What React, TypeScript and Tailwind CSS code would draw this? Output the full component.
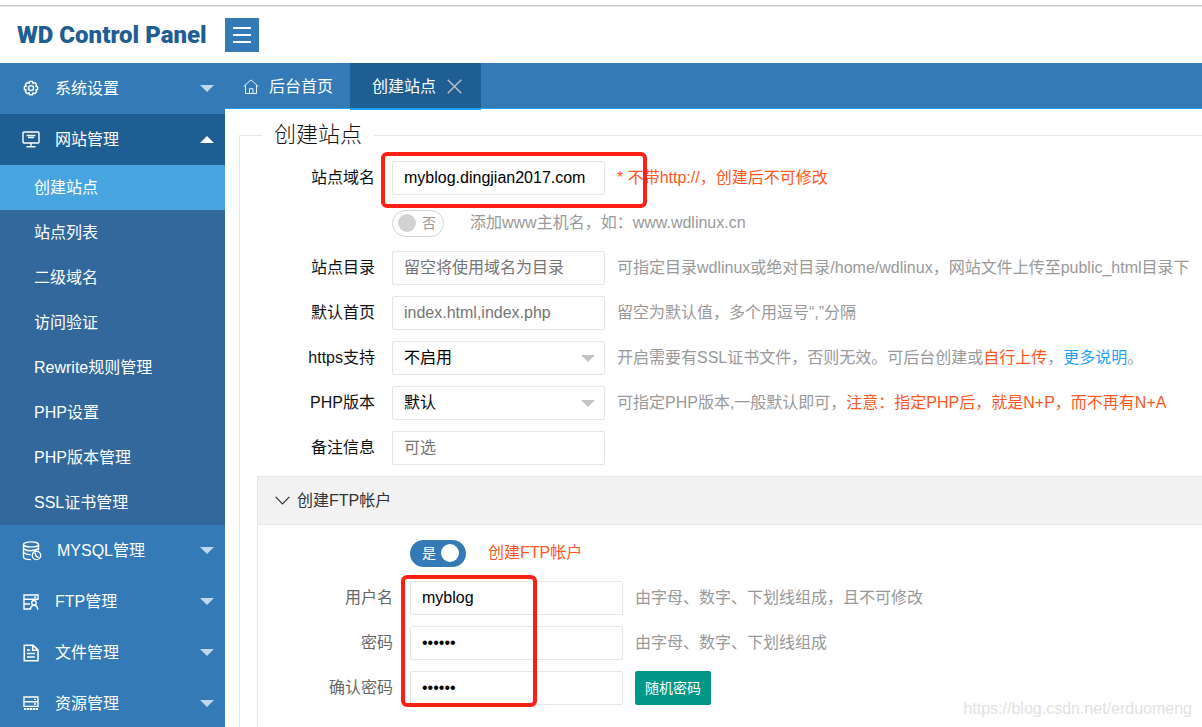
import React, { useState } from "react";

interface MenuGroup {
  label: string;
  icon: React.ReactNode;
  children?: string[];
}

interface FieldProps {
  id: string;
  label: string;
  labelClass?: string;
  hint?: React.ReactNode;
  children: React.ReactNode;
}

const iconProps = {
  width: 18,
  height: 18,
  viewBox: "0 0 18 18",
  fill: "none",
  stroke: "currentColor",
  strokeWidth: 1.4,
};

const GearIcon = () => (
  <svg {...iconProps}>
    <path
      d="M7.600 1.500h2.800l.5 1.900 1.700-.9 2 2-.9 1.700 1.900.5v2.800l-1.900.5.9 1.700-2 2-1.700-.9-.5 1.900H7.600l-.5-1.900-1.700.9-2-2 .9-1.700-1.900-.5V6.700l1.900-.5-.9-1.700 2-2 1.700.9z"
      strokeLinejoin="round"
    />
    <circle cx="9" cy="8.100" r="2.500" />
  </svg>
);

const MonitorIcon = () => (
  <svg {...iconProps}>
    <rect x="1" y="1" width="16" height="11" rx="1" />
    <path d="M4.500 4.500h9M6 6.500h6M9 12v3.500M4.500 15.700h9" />
  </svg>
);

const DatabaseIcon = () => (
  <svg {...iconProps} width={20} height={20} viewBox="0 0 20 20">
    <ellipse cx="9" cy="3.400" rx="7.500" ry="2.500" />
    <path d="M1.500 3.400v12.600c0 1.500 3.200 2.600 7.500 2.600M16.500 3.400v5.800M1.500 7.400c1.500 1.500 4 2.300 6.500 2.300 3.600 0 6.700-.8 8.500-2.300M1.500 11.500c1.500 1.400 4 2.200 7 2.200" />
    <circle cx="14.500" cy="14.400" r="4.200" />
    <path d="M12.800 11.800l1.500 3.200 2.200 1.600" />
  </svg>
);

const FtpIcon = () => (
  <svg {...iconProps}>
    <path d="M8 16H2V2h14v5M2 6.300h14M2 11h6M12 4.200h2" />
    <circle cx="12" cy="9.800" r="2.300" />
    <path d="M8.300 16.700c.4-2.700 1.800-4.500 3.700-4.500s3.500 1.800 3.900 4.500" />
  </svg>
);

const FileIcon = () => (
  <svg {...iconProps} strokeWidth={1.6}>
    <path d="M2.300 1.300h8.700l5 4.600v10.800H2.300zM10.700 1.500v4.700h5M5 6h3M5 9.500h8M5 13h8" />
  </svg>
);

const ServerIcon = () => (
  <svg {...iconProps}>
    <path d="M2 2h14v4.700H2zM2 6.700h14v4.700H2zM12 4.400h2M12 9h2" />
    <path d="M2 14h14" strokeWidth={2.200} strokeDasharray="2.300 .6" />
  </svg>
);

const menu: MenuGroup[] = [
  { label: "系统设置", icon: <GearIcon /> },
  {
    label: "网站管理",
    icon: <MonitorIcon />,
    children: [
      "创建站点",
      "站点列表",
      "二级域名",
      "访问验证",
      "Rewrite规则管理",
      "PHP设置",
      "PHP版本管理",
      "SSL证书管理",
    ],
  },
  { label: "MYSQL管理", icon: <DatabaseIcon /> },
  { label: "FTP管理", icon: <FtpIcon /> },
  { label: "文件管理", icon: <FileIcon /> },
  { label: "资源管理", icon: <ServerIcon /> },
];

const inputClass =
  "h-[34px] w-full rounded-xs border border-[#e6e6e6] bg-white px-[11px] text-black placeholder-[#757575] outline-none";

const Field = ({ id, label, labelClass = "text-[#111]", hint, children }: FieldProps) => (
  <div className="flex h-[34px] items-center">
    <label htmlFor={id} className={`w-[135px] shrink-0 text-right ${labelClass}`}>
      {label}
    </label>
    <div className="relative ml-[17px] w-[213px] shrink-0">{children}</div>
    <div className="ml-3 whitespace-nowrap text-[#999]">{hint}</div>
  </div>
);

const Caret = ({ className }: { className: string }) => (
  <svg width="14" height="7" viewBox="0 0 14 7" className={className}>
    <path d="M0 0h14L7 7z" fill="currentColor" />
  </svg>
);

const Sidebar = () => {
  const [open, setOpen] = useState(1);

  return (
    <nav className="w-[225px] shrink-0 bg-[#337ab7] text-white">
      <ul>
        {menu.map((group, index) => (
          <li key={group.label}>
            <button
              type="button"
              onClick={() => setOpen(index)}
              className={`flex h-[51px] w-full items-center pr-[11px] pl-[22px] ${
                open === index ? "bg-[#1f5e93]" : ""
              }`}
            >
              {group.icon}
              <span className="ml-[15px]">{group.label}</span>
              <Caret
                className={`ml-auto ${open === index ? "rotate-180" : "text-[#c2d7e9]"}`}
              />
            </button>
            {group.children && open === index && (
              <ul className="bg-[#33689c]">
                {group.children.map((item, i) => (
                  <li key={item}>
                    <a
                      href="#"
                      className={`flex h-[45px] items-center pl-[34px] ${
                        i === 0 ? "bg-[#48a5df]" : ""
                      }`}
                    >
                      {item}
                    </a>
                  </li>
                ))}
              </ul>
            )}
          </li>
        ))}
      </ul>
    </nav>
  );
};

const App = () => {
  const [www, setWww] = useState(false);
  const [ftp, setFtp] = useState(true);

  return (
    <div className="relative flex h-screen flex-col overflow-hidden bg-white font-['Liberation_Sans','Noto_Sans_CJK_SC',sans-serif] text-base leading-6">
      <header className="flex h-[63px] shrink-0 flex-col">
        <div className="mt-[5px] h-[2px] shrink-0 border-t border-b border-t-[#c8c8c8] border-b-[#e6e6e6]" />
        <div className="flex flex-1 items-center pl-[17px]">
          <h1 className="w-[208px] whitespace-nowrap font-['Impact','Roboto',sans-serif] text-2xl font-black text-[#1f5e93]">
            WD Control Panel
          </h1>
          <button
            type="button"
            aria-label="菜单"
            className="flex size-[34px] items-center justify-center bg-[#337ab7] text-white"
          >
            <svg width="18" height="16" viewBox="0 0 18 16" stroke="currentColor" strokeWidth="2">
              <path d="M0 1h18M0 8h18M0 15h18" />
            </svg>
          </button>
        </div>
      </header>

      <div className="flex min-h-0 flex-1">
        <Sidebar />

        <div className="min-w-0 flex-1">
          <div className="flex h-[46px] border-b border-[#1e9fff] bg-[#337ab7] text-white">
            <a href="#" className="flex w-[125px] items-center pt-0.5 pl-[18px]">
              <svg width="16" height="16" viewBox="0 0 16 16" fill="none" stroke="currentColor" className="opacity-90">
                <path d="M.7 7.500L8 .9l7.300 6.600M2.500 6.200v8.300h11V6.200M6.500 14.500V9.700h3.500v4.800" />
              </svg>
              <span className="ml-[10px]">后台首页</span>
            </a>
            <div className="flex h-[47px] w-[131px] items-center border-b-2 border-[#1e9fff] bg-[#1f5e93] pt-0.5 pl-[22px]">
              创建站点
              <button type="button" aria-label="关闭" className="ml-[11px] text-[#b9bdc4]">
                <svg width="15" height="15" viewBox="0 0 15 15" stroke="currentColor" strokeWidth="1.500">
                  <path d="M.7.7l13.600 13.600M14.300.7L.7 14.300" />
                </svg>
              </button>
            </div>
          </div>

          <main className="pt-3 pl-[14px]">
            <fieldset className="min-w-0 border-t border-l border-[#e6e6e6]">
              <legend className="ml-[22px] px-3 text-[22px] leading-7 font-light text-[#111]">
                创建站点
              </legend>

              <div className="flex flex-col gap-[11px] pt-3">
                <Field
                  id="domain"
                  label="站点域名"
                  hint={<span className="text-[#ff5722]">* 不带http://，创建后不可修改</span>}
                >
                  <input id="domain" defaultValue="myblog.dingjian2017.com" className={inputClass} />
                  <div className="pointer-events-none absolute -top-[9px] -left-[11px] h-14 w-[266px] rounded-md border-4 border-[#ff2015]" />
                </Field>

                <div className="flex h-[34px] items-center pl-[152px]">
                  <button
                    type="button"
                    role="switch"
                    aria-checked={www}
                    aria-label="添加www主机名"
                    onClick={() => setWww(!www)}
                    className="flex h-[27px] w-[52px] items-center gap-[6px] rounded-full border border-[#d2d2d2] pl-[5px] text-sm text-[#999]"
                  >
                    <span className="size-[18px] rounded-full bg-[#d2d2d2]" />否
                  </button>
                  <span className="ml-[26px] text-[#999]">添加www主机名，如：www.wdlinux.cn</span>
                </div>

                <Field
                  id="dir"
                  label="站点目录"
                  hint="可指定目录wdlinux或绝对目录/home/wdlinux，网站文件上传至public_html目录下"
                >
                  <input id="dir" placeholder="留空将使用域名为目录" className={inputClass} />
                </Field>

                <Field id="index" label="默认首页" hint="留空为默认值，多个用逗号“,”分隔">
                  <input id="index" placeholder="index.html,index.php" className={inputClass} />
                </Field>

                <Field
                  id="https"
                  label="https支持"
                  hint={
                    <>
                      开启需要有SSL证书文件，否则无效。可后台创建或
                      <a href="#" className="text-[#ff5722]">自行上传</a>，
                      <a href="#" className="text-[#1e9fff]">更多说明</a>。
                    </>
                  }
                >
                  <select id="https" className={`appearance-none ${inputClass}`}>
                    <option>不启用</option>
                  </select>
                  <Caret className="pointer-events-none absolute top-[14px] right-[10px] text-[#c2c2c2]" />
                </Field>

                <Field
                  id="php"
                  label="PHP版本"
                  hint={
                    <>
                      可指定PHP版本,一般默认即可，
                      <span className="text-[#ff5722]">注意：指定PHP后，就是N+P，而不再有N+A</span>
                    </>
                  }
                >
                  <select id="php" className={`appearance-none ${inputClass}`}>
                    <option>默认</option>
                  </select>
                  <Caret className="pointer-events-none absolute top-[14px] right-[10px] text-[#c2c2c2]" />
                </Field>

                <Field id="note" label="备注信息">
                  <input id="note" placeholder="可选" className={inputClass} />
                </Field>
              </div>

              <section className="mt-[11px] ml-[17px] border-t border-l border-[#e6e6e6] pb-10">
                <h2 className="flex h-12 items-center border-b border-[#e6e6e6] bg-[#f2f2f2] pl-[17px] text-[#333]">
                  <svg width="15" height="9" viewBox="0 0 15 9" fill="none" stroke="currentColor" strokeWidth="1.200">
                    <path d="M.7.8l6.800 7 6.800-7" />
                  </svg>
                  <span className="ml-[7px]">创建FTP帐户</span>
                </h2>

                <div className="flex flex-col gap-[11px] pt-[11px]">
                  <div className="flex h-[34px] items-center pl-[152px]">
                    <button
                      type="button"
                      role="switch"
                      aria-checked={ftp}
                      aria-label="创建FTP帐户"
                      onClick={() => setFtp(!ftp)}
                      className="flex h-[27px] w-[56px] items-center gap-[5px] rounded-full bg-[#337ab7] pl-3 text-sm text-white"
                    >
                      是<span className="size-[18px] rounded-full bg-white" />
                    </button>
                    <span className="ml-[22px] text-[#ff5722]">创建FTP帐户</span>
                  </div>

                  <div className="relative flex flex-col gap-[11px]">
                    <Field
                      id="user"
                      label="用户名"
                      labelClass="text-[#666]"
                      hint="由字母、数字、下划线组成，且不可修改"
                    >
                      <input id="user" defaultValue="myblog" className={inputClass} />
                    </Field>

                    <Field
                      id="pass"
                      label="密码"
                      labelClass="text-[#666]"
                      hint="由字母、数字、下划线组成"
                    >
                      <input id="pass" type="password" defaultValue="123456" className={inputClass} />
                    </Field>

                    <Field
                      id="confirm"
                      label="确认密码"
                      labelClass="text-[#666]"
                      hint={
                        <button
                          type="button"
                          className="block h-[34px] w-[76px] rounded-xs bg-[#009688] text-sm text-white"
                        >
                          随机密码
                        </button>
                      }
                    >
                      <input id="confirm" type="password" defaultValue="123456" className={inputClass} />
                    </Field>
                    <div className="pointer-events-none absolute -top-[6px] left-[143px] h-[132px] w-[136px] rounded-md border-4 border-[#ff2015]" />
                  </div>
                </div>
              </section>
            </fieldset>
          </main>
        </div>
      </div>

      <div className="absolute right-[10px] bottom-[6px] text-[#e2e2e2]">
        https://blog.csdn.net/erduomeng
      </div>
    </div>
  );
};

export default App;
